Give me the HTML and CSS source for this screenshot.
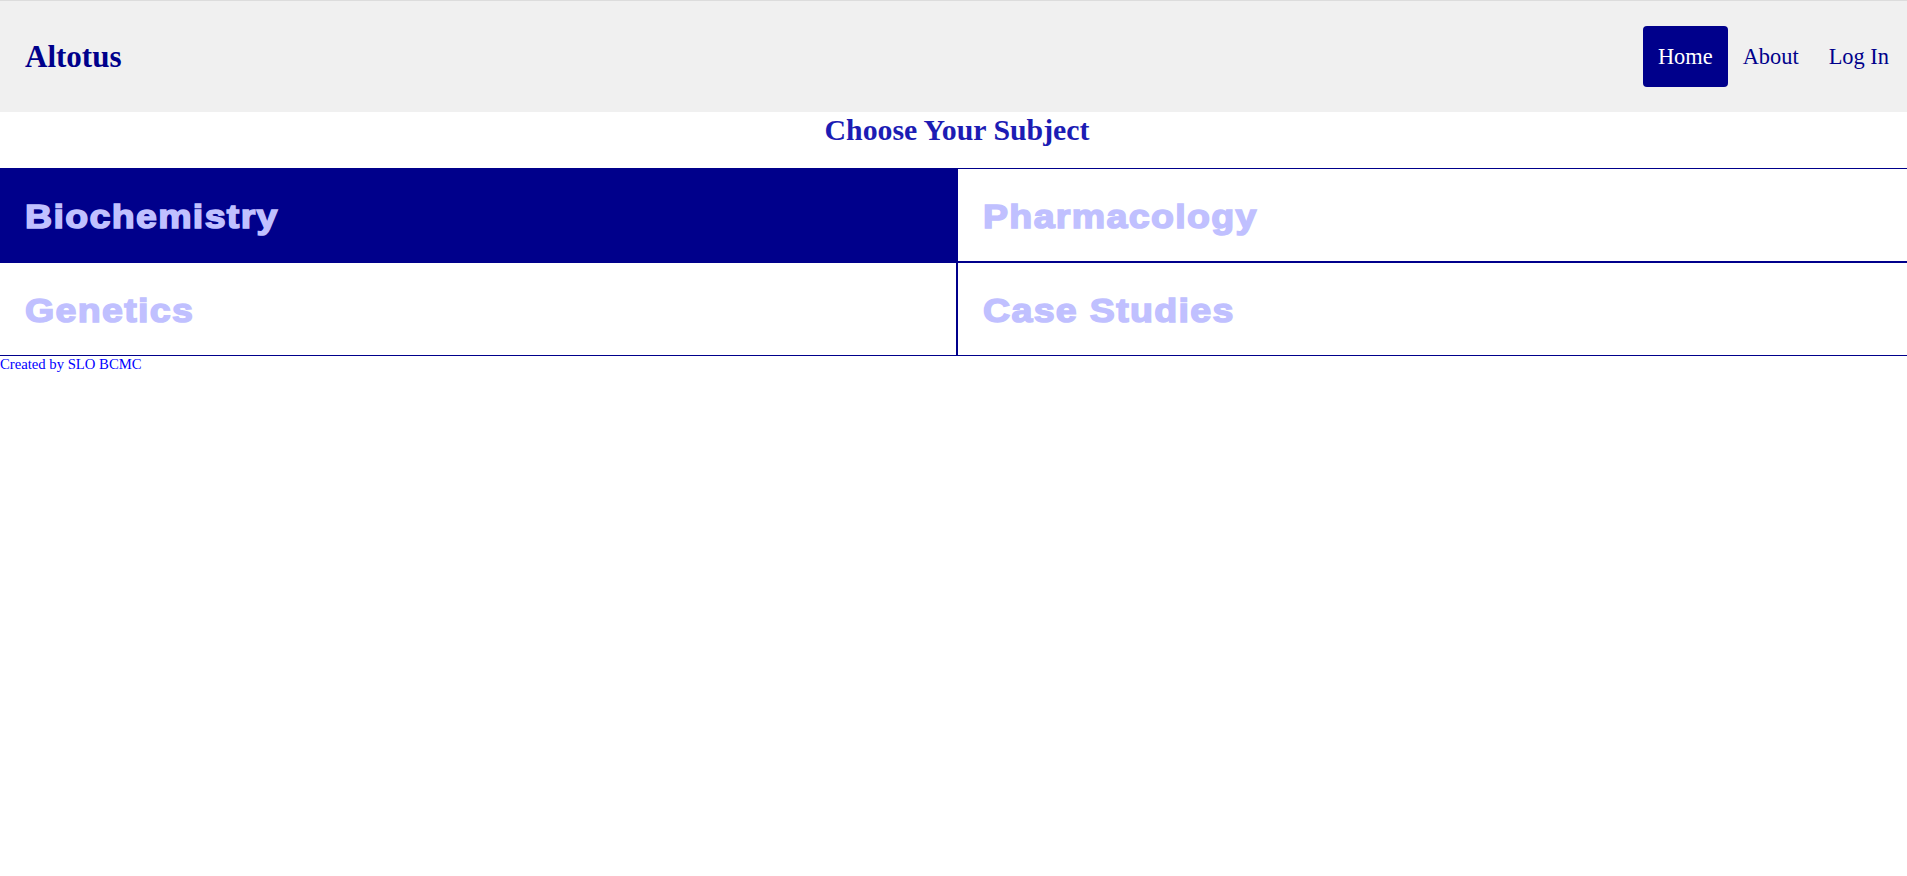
FILE: index.html
```html
<!DOCTYPE html>
<html lang="en">
<head>
<meta charset="utf-8">
<title>Altotus</title>
<link rel="stylesheet" href="styles.css">
</head>
<body>
<header class="topbar">
  <div class="brand">Altotus</div>
  <nav class="nav">
    <a class="nav-link active" href="#">Home</a>
    <a class="nav-link" href="#">About</a>
    <a class="nav-link" href="#">Log In</a>
  </nav>
</header>
<h2 class="title">Choose Your Subject</h2>
<div class="subjects">
  <a class="subject left selected" href="#"><span class="subject-label">Biochemistry</span></a>
  <a class="subject right" href="#"><span class="subject-label">Pharmacology</span></a>
  <a class="subject left" href="#"><span class="subject-label">Genetics</span></a>
  <a class="subject right" href="#"><span class="subject-label">Case Studies</span></a>
</div>
<footer class="footer">Created by SLO BCMC</footer>
</body>
</html>
```
FILE: styles.css
```css
html, body {
  margin: 0;
  padding: 0;
  background: #ffffff;
  font-family: "Liberation Serif", "Times New Roman", serif;
}

.topbar {
  display: flex;
  align-items: center;
  justify-content: space-between;
  height: 111px;
  padding: 0 3px 0 25px;
  background: #f0f0f0;
  border-top: 1px solid #dcdcdc;
}

.brand {
  font-size: 31px;
  font-weight: bold;
  color: #00008b;
}

.nav {
  display: flex;
  align-items: center;
}

.nav-link {
  display: block;
  padding: 17px 15px;
  line-height: 27px;
  font-size: 22.4px;
  color: #00008b;
  text-decoration: none;
  border-radius: 4px;
}

.nav-link.active {
  background: #00008b;
  color: #ffffff;
}

.title {
  margin: 1px 0 21px;
  padding-left: 7px;
  text-align: center;
  font-size: 29.8px;
  font-weight: bold;
  line-height: 34px;
  color: #1c1cb4;
}

.subjects {
  display: grid;
  grid-template-columns: 957px 1fr;
}

.subject {
  display: block;
  height: 92px;
  line-height: 96px;
  padding: 0 25px;
  border-top: 1px solid #00008b;
  border-bottom: 1px solid #00008b;
  font-family: "Liberation Sans", Arial, sans-serif;
  font-weight: bold;
  font-size: 33.5px;
  color: #c0c0ff;
  text-decoration: none;
  white-space: nowrap;
}

.subject-label {
  display: inline-block;
  letter-spacing: 1.2px;
  -webkit-text-stroke: 1.5px #c0c0ff;
  transform: scaleX(1.12);
  transform-origin: left center;
}

.subject.left {
  border-right: 1px solid #00008b;
}

.subject.right {
  border-left: 1px solid #00008b;
}

.subject.selected {
  background: #00008b;
}

.footer {
  font-size: 14.7px;
  line-height: 17px;
  color: #0000ff;
}
```
